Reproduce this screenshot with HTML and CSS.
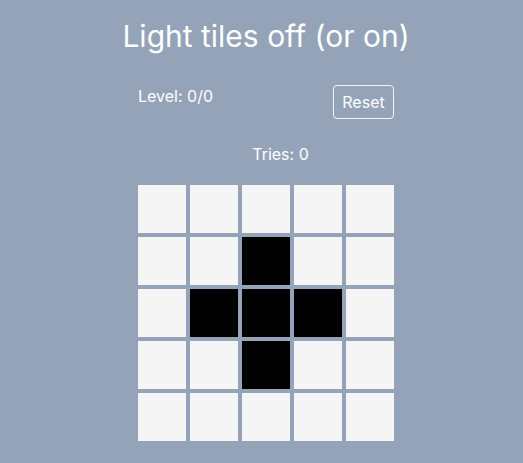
FILE: index.html
```html
<!DOCTYPE html>
<html>
<head>
<meta charset="utf-8">
<link rel="stylesheet" href="styles.css">
</head>
<body>
<main class="app">
  <h1 class="title">Light tiles off (or on)</h1>
  <div class="panel">
    <div class="controls">
      <span class="level">Level: 0/0</span>
      <button class="reset">Reset</button>
    </div>
    <div class="tries">Tries: 0</div>
    <div class="grid">
      <div class="tile"></div><div class="tile"></div><div class="tile"></div><div class="tile"></div><div class="tile"></div>
      <div class="tile"></div><div class="tile"></div><div class="tile on"></div><div class="tile"></div><div class="tile"></div>
      <div class="tile"></div><div class="tile on"></div><div class="tile on"></div><div class="tile on"></div><div class="tile"></div>
      <div class="tile"></div><div class="tile"></div><div class="tile on"></div><div class="tile"></div><div class="tile"></div>
      <div class="tile"></div><div class="tile"></div><div class="tile"></div><div class="tile"></div><div class="tile"></div>
    </div>
  </div>
</main>
</body>
</html>
```
FILE: styles.css
```css
html, body {
  margin: 0;
  padding: 0;
  background: #94a3b8;
  height: 100%;
}
body {
  font-family: Inter, "Noto Sans", sans-serif;
  color: #ffffff;
  padding-left: 9px;
  box-sizing: border-box;
}
.app {
  display: flex;
  flex-direction: column;
  align-items: center;
}
.title {
  margin: 17px 0 0;
  font-size: 30px;
  font-weight: 400;
  line-height: 39px;
}
.panel {
  width: 256px;
  display: flex;
  flex-direction: column;
  margin-top: 29px;
}
.controls {
  display: flex;
  justify-content: space-between;
  align-items: flex-start;
}
.level {
  font-size: 16px;
  line-height: 19px;
  padding-top: 2px;
}
.reset {
  font-family: inherit;
  font-size: 16px;
  color: #fff;
  background: transparent;
  border: 1px solid #f1f5f9;
  border-radius: 4px;
  width: 61px;
  height: 34px;
  padding: 0;
  cursor: pointer;
}
.tries {
  font-size: 16px;
  line-height: 19px;
  margin-top: 26px;
  padding-left: 29px;
  text-align: center;
}
.grid {
  margin-top: 21px;
  display: grid;
  grid-template-columns: repeat(5, 48px);
  grid-auto-rows: 48px;
  gap: 4px;
}
.tile {
  background: #f5f5f5;
}
.tile.on {
  background: #000;
}
```
